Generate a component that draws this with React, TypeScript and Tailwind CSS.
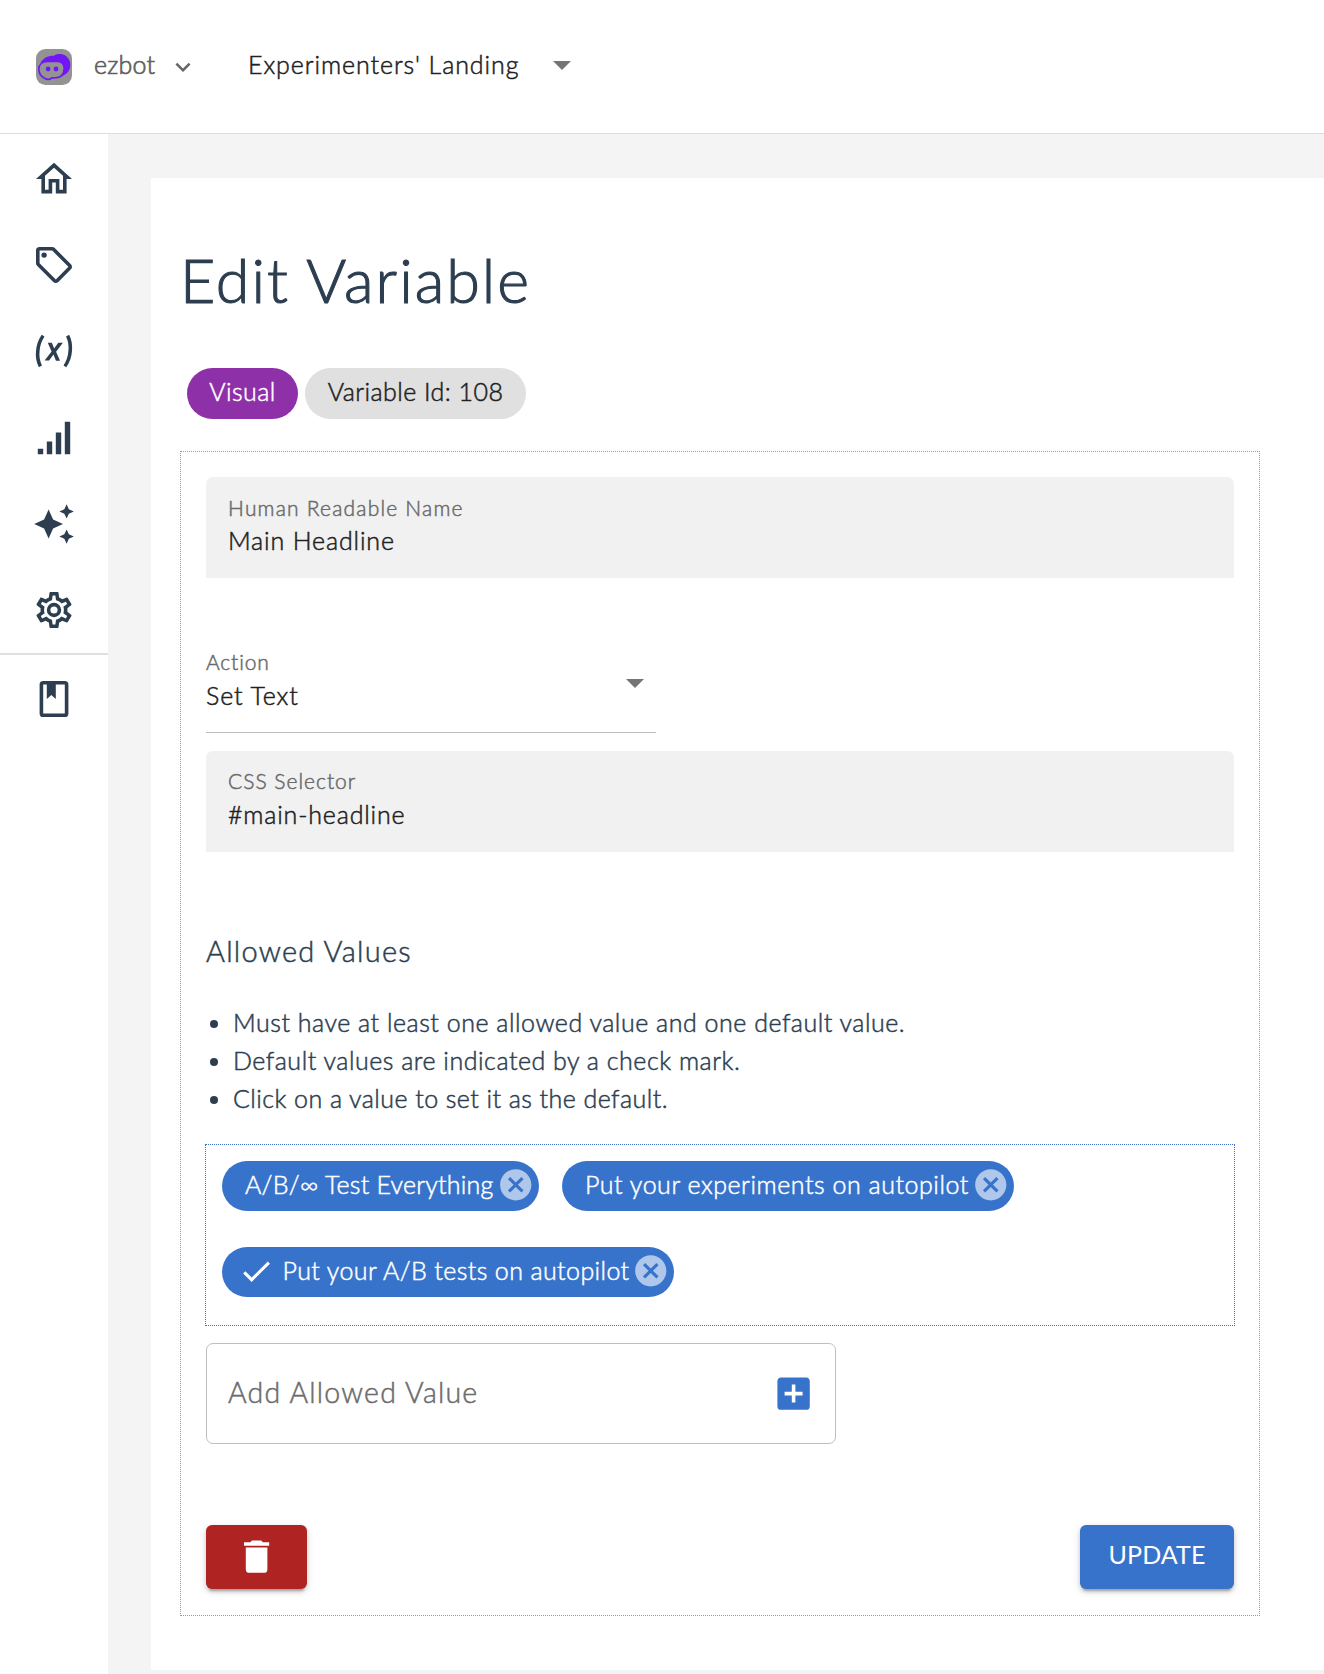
import React from "react";

const ICONS = {
  home: "M12 5.69L17 10.19V18H15V12H9V18H7V10.19L12 5.69M12 3L2 12H5V20H11V14H13V20H19V12H22",
  tag: "M21.41 11.58L12.41 2.58A2 2 0 0 0 11 2H4A2 2 0 0 0 2 4V11A2 2 0 0 0 2.59 12.42L11.59 21.42A2 2 0 0 0 13 22A2 2 0 0 0 14.41 21.41L21.41 14.41A2 2 0 0 0 22 13A2 2 0 0 0 21.41 11.58M13 20L4 11V4H11L20 13M6.5 5A1.5 1.5 0 1 1 5 6.5A1.5 1.5 0 0 1 6.5 5Z",
  variable:
    "M20.41,3C21.8,5.71 22.35,8.84 22,12C21.8,15.16 20.7,18.29 18.83,21L17.3,20C18.91,17.57 19.85,14.8 20,12C20.34,9.2 19.89,6.43 18.7,4L20.41,3M5.17,3L6.7,4C5.09,6.43 4.15,9.2 4,12C3.66,14.8 4.12,17.57 5.3,20L3.61,21C2.21,18.29 1.65,15.17 2,12C2.2,8.84 3.3,5.71 5.17,3M12.08,10.68L14.4,7.45H16.93L13.15,12.45L15.35,17.37H13.09L11.71,14L9.28,17.33H6.76L10.66,12.21L8.53,7.45H10.8L12.08,10.68Z",
  signal: "M3,21H6V18H3M8,21H11V14H8M13,21H16V9H13M18,21H21V3H18V21Z",
  creation:
    "M19,1L17.74,3.75L15,5L17.74,6.26L19,9L20.25,6.26L23,5L20.25,3.75M9,4L6.5,9.5L1,12L6.5,14.5L9,20L11.5,14.5L17,12L11.5,9.5M19,15L17.74,17.74L15,19L17.74,20.25L19,23L20.25,20.25L23,19L20.25,17.74",
  cog: "M12,8A4,4 0 0,1 16,12A4,4 0 0,1 12,16A4,4 0 0,1 8,12A4,4 0 0,1 12,8M12,10A2,2 0 0,0 10,12A2,2 0 0,0 12,14A2,2 0 0,0 14,12A2,2 0 0,0 12,10M10,22C9.75,22 9.54,21.82 9.5,21.58L9.13,18.93C8.5,18.68 7.96,18.34 7.44,17.94L4.95,18.95C4.73,19.03 4.46,18.95 4.34,18.73L2.34,15.27C2.21,15.05 2.27,14.78 2.46,14.63L4.57,12.97L4.5,12L4.57,11L2.46,9.37C2.27,9.22 2.21,8.95 2.34,8.73L4.34,5.27C4.46,5.05 4.73,4.96 4.95,5.05L7.44,6.05C7.96,5.66 8.5,5.32 9.13,5.07L9.5,2.42C9.54,2.18 9.75,2 10,2H14C14.25,2 14.46,2.18 14.5,2.42L14.87,5.07C15.5,5.32 16.04,5.66 16.56,6.05L19.05,5.05C19.27,4.96 19.54,5.05 19.66,5.27L21.66,8.73C21.79,8.95 21.73,9.22 21.54,9.37L19.43,11L19.5,12L19.43,13L21.54,14.63C21.73,14.78 21.79,15.05 21.66,15.27L19.66,18.73C19.54,18.95 19.27,19.04 19.05,18.95L16.56,17.95C16.04,18.34 15.5,18.68 14.87,18.93L14.5,21.58C14.46,21.82 14.25,22 14,22H10M11.25,4L10.88,6.61C9.68,6.86 8.62,7.5 7.85,8.39L5.44,7.35L4.69,8.65L6.8,10.2C6.4,11.37 6.4,12.64 6.8,13.8L4.68,15.36L5.43,16.66L7.86,15.62C8.63,16.5 9.68,17.14 10.87,17.38L11.24,20H12.76L13.13,17.39C14.32,17.14 15.37,16.5 16.14,15.62L18.57,16.66L19.32,15.36L17.2,13.81C17.6,12.64 17.6,11.37 17.2,10.2L19.31,8.65L18.56,7.35L16.15,8.39C15.38,7.5 14.32,6.86 13.12,6.62L12.75,4H11.25Z",
  book: "M18,2A2,2 0 0,1 20,4V20A2,2 0 0,1 18,22H6A2,2 0 0,1 4,20V4A2,2 0 0,1 6,2H18M18,4H13V12L10.5,9.75L8,12V4H6V20H18V4Z",
  trash: "M19,4H15.5L14.5,3H9.5L8.5,4H5V6H19M6,19A2,2 0 0,0 8,21H16A2,2 0 0,0 18,19V7H6V19Z",
  plusBox:
    "M17,13H13V17H11V13H7V11H11V7H13V11H17M19,3H5C3.89,3 3,3.89 3,5V19A2,2 0 0,0 5,21H19A2,2 0 0,0 21,19V5C21,3.89 20.1,3 19,3Z",
  cancel:
    "M12 2C6.47 2 2 6.47 2 12s4.47 10 10 10 10-4.47 10-10S17.53 2 12 2zm5 13.59L15.59 17 12 13.41 8.41 17 7 15.59 10.59 12 7 8.41 8.41 7 12 10.59 15.59 7 17 8.41 13.41 12 17 15.59z",
  check: "M9 16.17 4.83 12l-1.42 1.41L9 19 21 7l-1.41-1.41z",
  chevron: "M7.41,8.58L12,13.17L16.59,8.58L18,10L12,16L6,10L7.41,8.58Z",
};

function Icon({ name, className, viewBox = "0 0 24 24" }: { name: keyof typeof ICONS; className: string; viewBox?: string }) {
  return (
    <svg viewBox={viewBox} fill="currentColor" className={`shrink-0 ${className}`}>
      <path d={ICONS[name]} />
    </svg>
  );
}

function NavIcon({ name }: { name: keyof typeof ICONS }) {
  return <Icon name={name} className="size-11" viewBox="-0.222 -0.222 24.444 24.444" />;
}

function Caret({ className }: { className: string }) {
  return (
    <svg viewBox="0 0 18 9" fill="#757575" className={`h-[9px] w-[18px] shrink-0 ${className}`}>
      <path d="M0 0H18L9 9Z" />
    </svg>
  );
}

function Logo() {
  return (
    <svg viewBox="0 0 36 36" className="size-9 shrink-0">
      <rect width="36" height="36" rx="9.5" fill="#939393" />
      <path
        d="M4.500 14C7 9 12 6.500 18 6.700C20 4.800 26 4 30 7C35.500 11 35.300 19 32 23C30 25.500 27.500 26.600 25.500 27L20 12Z"
        fill="#7316f5"
      />
      <path
        d="M11.500 12.500H21C26 12 28.300 15.500 28.200 19.500C28 25.500 25 28.300 20.500 28.700L15.500 29C14.500 30.800 11.500 31 8.500 29.200C4.500 27 2.700 23.500 2.800 19.800C3 15.500 6.500 12.700 11.500 12.500Z"
        fill="#939393"
        stroke="#7316f5"
        strokeWidth="1.700"
      />
      <circle cx="12.100" cy="20" r="2.400" fill="#7316f5" />
      <circle cx="20" cy="20" r="2.400" fill="#7316f5" />
    </svg>
  );
}

function FilledField({ label, value, className, labelCls, valueCls }: { label: string; value: string; className: string; labelCls: string; valueCls: string }) {
  return (
    <div className={`h-[101px] rounded-t-[7px] bg-[#f1f1f1] pl-[22px] ${className}`}>
      <div className={`text-[21px] leading-[30px] text-[#6b6b6b] ${labelCls}`}>{label}</div>
      <div className={`text-[25px] leading-9 text-[#212121] ${valueCls}`}>{value}</div>
    </div>
  );
}

function ValueChip({ text, checked, className, textCls }: { text: string; checked?: boolean; className: string; textCls: string }) {
  return (
    <div className={`flex h-[50px] items-center rounded-full bg-[#3873cb] text-white ${className}`}>
      {checked && <Icon name="check" className="mr-[8px] mb-px -ml-[7px] size-[36.500px]" />}
      <span className={`pb-[5px] text-[25px] leading-9 ${textCls}`}>{text}</span>
      <Icon name="cancel" className="mr-[4.500px] mb-[3px] ml-auto size-[37.500px] text-[#afc7ea]" />
    </div>
  );
}

const NAV: (keyof typeof ICONS)[] = ["home", "tag", "variable", "signal", "creation", "cog"];

const RULES = [
  { text: "Must have at least one allowed value and one default value.", cls: "tracking-[0.52px]" },
  { text: "Default values are indicated by a check mark.", cls: "tracking-[0.52px]" },
  { text: "Click on a value to set it as the default.", cls: "tracking-[0.440px]" },
];

export default function App() {
  return (
    <div className="flex h-[1674px] w-[1324px] flex-col overflow-hidden bg-white font-['Lato',sans-serif] font-light whitespace-nowrap [-webkit-text-stroke:0.500px_currentColor]">
      <header className="flex h-[134px] shrink-0 items-center border-b border-[#dcdcdc] pl-9">
        <Logo />
        <span className="ml-[22px] w-[74px] pb-[6px] text-[25px] leading-9 tracking-[0.2px] text-[#5f5f5f] [-webkit-text-stroke:0.700px_currentColor]">
          ezbot
        </span>
        <Icon name="chevron" className="size-[30px] text-[#666]" />
        <span className="ml-[50px] w-[288px] pb-[6px] text-[25px] leading-9 tracking-[0.920px] text-[#212121]">
          Experimenters' Landing
        </span>
        <Caret className="mb-[2px] ml-[17px]" />
      </header>

      <div className="flex min-h-0 flex-1">
        <nav className="w-[108px] shrink-0 bg-white pt-[1.350px] text-[#2c3e50]">
          {NAV.map((name) => (
            <div key={name} className="flex h-[86.400px] items-center justify-center">
              <NavIcon name={name} />
            </div>
          ))}
          <div className="-mt-[0.500px] h-[2px] bg-[#e0e0e0]" />
          <div className="flex h-[87px] items-center justify-center">
            <NavIcon name="book" />
          </div>
        </nav>

        <main className="flex-1 bg-[#f4f4f4] pt-[44px] pl-[43px]">
          <section className="h-[1492px] bg-white pt-[67px] pl-[29px]">
            <h1 className="h-[70px] text-[61px] leading-[70px] font-light tracking-[2px] text-[#2c3e50] [-webkit-text-stroke:1.100px_currentColor]">
              Edit Variable
            </h1>

            <div className="mt-[53px] flex gap-[7px] pl-[7px]">
              <div className="flex h-[51px] w-[111px] items-center justify-center rounded-full bg-[#8e30a8] pb-[5px] text-[25px] leading-9 tracking-[0.450px] text-white">
                Visual
              </div>
              <div className="flex h-[51px] w-[221px] items-center justify-center rounded-full bg-[#e0e0e0] pb-[5px] text-[25px] leading-9 tracking-[0.450px] text-[#212121]">
                Variable Id: 108
              </div>
            </div>

            <form className="mt-[32px] h-[1165px] w-[1080px] border border-dotted border-[#999] p-[25px]">
              <FilledField
                label="Human Readable Name"
                value="Main Headline"
                className="pt-[16px]"
                labelCls="h-[29px] tracking-[1.200px]"
                valueCls="tracking-[0.850px]"
              />

              <div className="mt-[69px] flex h-[86px] w-[450px] border-b border-[#bdbdbd]">
                <div className="flex-1">
                  <div className="h-[30px] text-[21px] leading-[30px] tracking-[0.850px] text-[#6b6b6b]">Action</div>
                  <div className="h-9 text-[25px] leading-9 tracking-[0.900px] text-[#212121]">Set Text</div>
                </div>
                <Caret className="mt-8 mr-[12px]" />
              </div>

              <div className="mt-[18px]">
                <FilledField
                  label="CSS Selector"
                  value="#main-headline"
                  className="pt-[15px]"
                  labelCls="h-[30px] tracking-[1px]"
                  valueCls="tracking-[0.830px]"
                />
              </div>

              <h2 className="mt-[79px] h-10 text-[29px] leading-10 font-light tracking-[1.240px] text-[#2c3e50]">Allowed Values</h2>

              <ul className="mt-[32px] text-[#2c3e50]">
                {RULES.map((r) => (
                  <li key={r.text} className="flex h-[38px] items-center">
                    <span className="mt-[3px] ml-1 size-2 rounded-full bg-[#2c3e50]" />
                    <span className={`ml-[15px] text-[25px] leading-[38px] ${r.cls}`}>{r.text}</span>
                  </li>
                ))}
              </ul>

              <div className="-mx-px mt-[27px] h-[182px] border border-dotted border-[#3873cb] p-4">
                <div className="flex gap-[23px]">
                  <ValueChip text="A/B/∞ Test Everything" className="w-[317px] pl-[23px]" textCls="tracking-[0.23px]" />
                  <ValueChip text="Put your experiments on autopilot" className="w-[452px] pl-[23px]" textCls="tracking-[0.53px]" />
                </div>
                <div className="mt-9 flex">
                  <ValueChip checked text="Put your A/B tests on autopilot" className="w-[452px] pl-[23px]" textCls="tracking-[0.390px]" />
                </div>
              </div>

              <div className="mt-[17px] flex h-[101px] w-[630px] items-center rounded-[7px] border border-[#bfbfbf] pr-[20px] pl-[21px]">
                <span className="pb-[4px] text-[28.500px] leading-10 tracking-[1.220px] text-[#6b6b6b]">Add Allowed Value</span>
                <Icon name="plusBox" className="ml-auto size-[43.200px] text-[#3873cb]" />
              </div>

              <div className="mt-[81px] flex justify-between">
                <button
                  type="button"
                  aria-label="Delete"
                  className="flex h-[64px] w-[101px] items-center justify-center rounded-[6px] bg-[#b02323] text-white shadow-[0_5px_2px_-3px_rgba(0,0,0,0.2),0_3px_4px_0_rgba(0,0,0,0.14),0_2px_9px_0_rgba(0,0,0,0.12)]"
                >
                  <Icon name="trash" className="size-[43.200px]" />
                </button>
                <button
                  type="button"
                  className="flex h-[64px] w-[154px] items-center justify-center rounded-[6px] bg-[#3873cb] pb-[6px] text-[25px] leading-9 font-normal tracking-[0.1px] text-white shadow-[0_5px_2px_-3px_rgba(0,0,0,0.2),0_3px_4px_0_rgba(0,0,0,0.14),0_2px_9px_0_rgba(0,0,0,0.12)] [-webkit-text-stroke:0px]"
                >
                  UPDATE
                </button>
              </div>
            </form>
          </section>
        </main>
      </div>
    </div>
  );
}
